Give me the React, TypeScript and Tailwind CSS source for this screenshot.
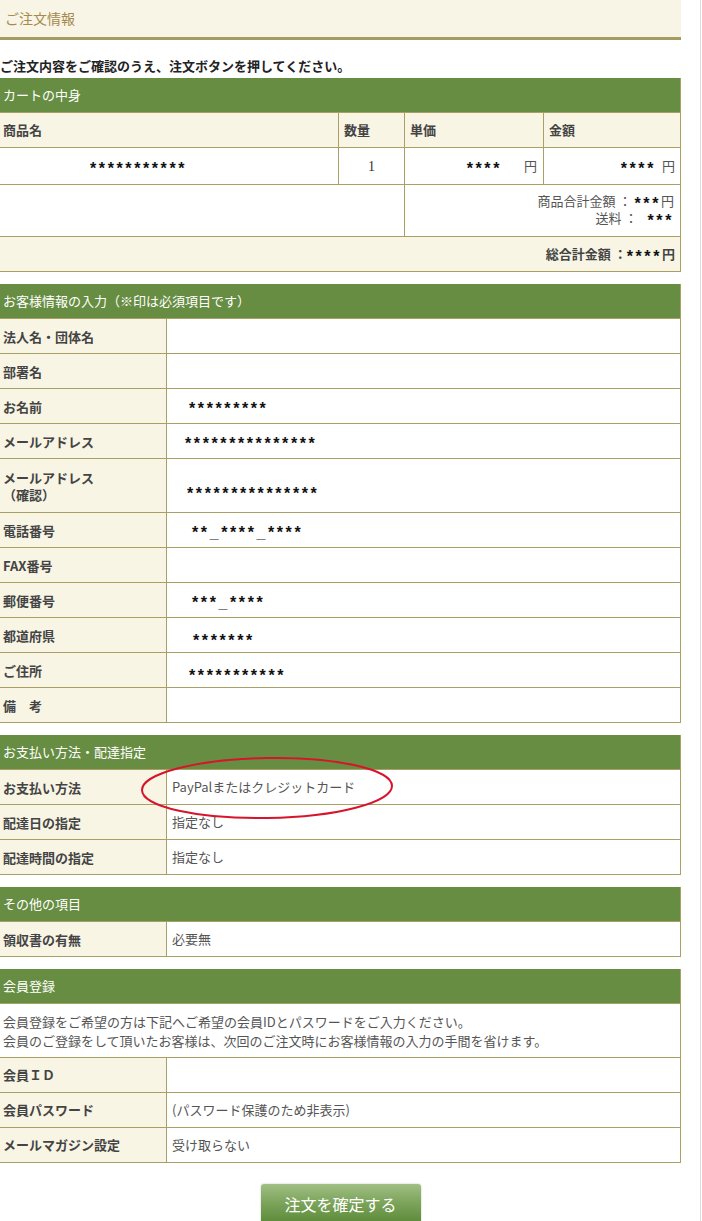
import React from "react";

const border = "border-[#a8a064]";

interface Row {
  label: React.ReactNode;
  value?: React.ReactNode;
  tall?: boolean;
  indent?: string;
}

// masked values in the screenshot are drawn with big, evenly spaced asterisks
function Mask({ text, className = "" }: { text: string; className?: string }) {
  return (
    <span
      className={`relative top-[3px] font-['Liberation_Sans',sans-serif] text-[16px] font-bold tracking-[2.6px] text-[#111] ${className}`}
    >
      {text}
    </span>
  );
}

function SectionHeader({ title }: { title: string }) {
  return (
    <div className={`flex h-[35px] items-center border-r border-b ${border} bg-[#668d42] pl-[3px] text-[13px] text-white`}>
      {title}
    </div>
  );
}

function InfoTable({ title, rows, mask }: { title: string; rows: Row[]; mask?: boolean }) {
  return (
    <div>
      <SectionHeader title={title} />
      {rows.map((row, i) => (
        <div key={i} className={`flex ${row.tall ? "h-[54px]" : "h-[35px]"} border-r border-b ${border}`}>
          <div className={`flex w-[167px] shrink-0 items-center border-r ${border} bg-[#f8f5e4] pl-[3px] text-[13px] leading-[17px] font-bold text-[#444]`}>
            {row.label}
          </div>
          <div
            className={
              mask
                ? `flex flex-1 items-center bg-white ${row.indent ?? "pl-[22px]"}`
                : "flex flex-1 items-center bg-white pl-[5px] text-[13px] text-[#555]"
            }
          >
            {row.value}
          </div>
        </div>
      ))}
    </div>
  );
}

export default function App() {
  const customerRows: Row[] = [
    { label: "法人名・団体名" },
    { label: "部署名" },
    { label: "お名前", value: <Mask text="*********" />, indent: "pl-[22px]" },
    { label: "メールアドレス", value: <Mask text="***************" />, indent: "pl-[18px]" },
    {
      label: (
        <span>
          メールアドレス
          <br />
          （確認）
        </span>
      ),
      value: <Mask text="***************" className="top-[8px]" />,
      tall: true,
      indent: "pl-[20px]",
    },
    { label: "電話番号", value: <Mask text="**_****_****" />, indent: "pl-[25px]" },
    { label: "FAX番号" },
    { label: "郵便番号", value: <Mask text="***_****" />, indent: "pl-[25px]" },
    { label: "都道府県", value: <Mask text="*******" className="top-[6px]" />, indent: "pl-[26px]" },
    { label: "ご住所", value: <Mask text="***********" className="top-[6px]" />, indent: "pl-[22px]" },
    { label: "備　考" },
  ];

  return (
    <div className="min-h-screen bg-white font-['Noto_Sans_CJK_JP',sans-serif]">
      <div className="w-[701px] border-r border-[#dcdcdc] pb-[40px]">
        <div className="w-[681px]">
          <div className="flex h-[40px] items-center border-b-[3px] border-[#a59c62] bg-[#f8f5e6] pl-[5px] text-[14px] text-[#a48a4c]">
            ご注文情報
          </div>

          <p className="mt-[18px] mb-[4px] text-[13px] leading-[16px] font-bold text-[#222]">
            ご注文内容をご確認のうえ、注文ボタンを押してください。
          </p>

          {/* cart */}
          <div>
            <SectionHeader title="カートの中身" />
            <div className={`flex h-[35px] border-r border-b ${border} bg-[#f8f5e4] text-[13px] font-bold text-[#444]`}>
              <div className={`flex w-[339px] items-center border-r ${border} pl-[3px]`}>商品名</div>
              <div className={`flex w-[66px] items-center border-r ${border} pl-[5px]`}>数量</div>
              <div className={`flex w-[139px] items-center border-r ${border} pl-[5px]`}>単価</div>
              <div className="flex flex-1 items-center pl-[5px]">金額</div>
            </div>
            <div className={`flex h-[37px] border-r border-b ${border} bg-white text-[13px] text-[#333]`}>
              <div className={`flex w-[339px] items-center border-r ${border} pl-[90px]`}>
                <Mask text="***********" />
              </div>
              <div className={`flex w-[66px] items-center justify-center border-r ${border} font-['Liberation_Serif',serif] text-[14px] text-[#333]`}>
                1
              </div>
              <div className={`flex w-[139px] items-center justify-end border-r ${border} pr-[6px]`}>
                <Mask text="****" className="mr-[22px]" />
                <span className="text-[#555]">円</span>
              </div>
              <div className="flex flex-1 items-center justify-end pr-[5px]">
                <Mask text="****" className="mr-[6px]" />
                <span className="text-[#555]">円</span>
              </div>
            </div>
            <div className={`flex h-[52px] border-r border-b ${border} bg-white text-[13px] text-[#555]`}>
              <div className={`w-[405px] border-r ${border}`} />
              <div className="flex flex-1 flex-col items-end pt-[7px] pr-[6px] leading-[17px]">
                <div className="flex items-center">
                  商品合計金額 ：<Mask text="***" className="ml-[3px] tracking-[1px]" />
                  <span>円</span>
                </div>
                <div className="flex items-center">
                  送料 ：<Mask text="***" className="ml-[10px] tracking-[1px]" />
                </div>
              </div>
            </div>
            <div className={`flex h-[35px] items-center justify-end border-r border-b ${border} bg-[#f8f5e4] pr-[5px] text-[13px] font-bold text-[#444]`}>
              総合計金額 ：<Mask text="****" className="tracking-[1px]" />
              <span>円</span>
            </div>
          </div>

          <div className="mt-[12px]">
            <InfoTable title="お客様情報の入力（※印は必須項目です）" rows={customerRows} mask />
          </div>

          <div className="relative mt-[12px]">
            <InfoTable
              title="お支払い方法・配達指定"
              rows={[
                { label: "お支払い方法", value: "PayPalまたはクレジットカード" },
                { label: "配達日の指定", value: "指定なし" },
                { label: "配達時間の指定", value: "指定なし" },
              ]}
            />
            <svg className="pointer-events-none absolute top-[20px] left-[139px]" width="256" height="66" viewBox="0 0 256 66">
              <ellipse cx="128" cy="33" rx="125" ry="30" fill="none" stroke="#d8142c" strokeWidth="2" transform="rotate(-1 128 33)" />
            </svg>
          </div>

          <div className="mt-[12px]">
            <InfoTable title="その他の項目" rows={[{ label: "領収書の有無", value: "必要無" }]} />
          </div>

          <div className="mt-[12px]">
            <SectionHeader title="会員登録" />
            <div className={`flex h-[54px] flex-col justify-center border-r border-b ${border} bg-white pl-[3px] text-[13px] leading-[19px] text-[#555]`}>
              <div>会員登録をご希望の方は下記へご希望の会員IDとパスワードをご入力ください。</div>
              <div>会員のご登録をして頂いたお客様は、次回のご注文時にお客様情報の入力の手間を省けます。</div>
            </div>
            {[
              { label: "会員ＩＤ", value: "" },
              { label: "会員パスワード", value: "(パスワード保護のため非表示)" },
              { label: "メールマガジン設定", value: "受け取らない" },
            ].map((row) => (
              <div key={row.label} className={`flex h-[35px] border-r border-b ${border}`}>
                <div className={`flex w-[167px] shrink-0 items-center border-r ${border} bg-[#f8f5e4] pl-[3px] text-[13px] font-bold text-[#444]`}>
                  {row.label}
                </div>
                <div className="flex flex-1 items-center bg-white pl-[5px] text-[13px] text-[#555]">{row.value}</div>
              </div>
            ))}
          </div>

          <div className="mt-[21px] flex justify-center">
            <button
              type="button"
              className="h-[40px] w-[160px] rounded-[3px] bg-gradient-to-b from-[#a0bf84] via-[#7aa258] to-[#5b8a37] text-[16px] text-white shadow-[0_0_2px_rgba(0,0,0,0.25)]"
            >
              注文を確定する
            </button>
          </div>
        </div>
      </div>
    </div>
  );
}
